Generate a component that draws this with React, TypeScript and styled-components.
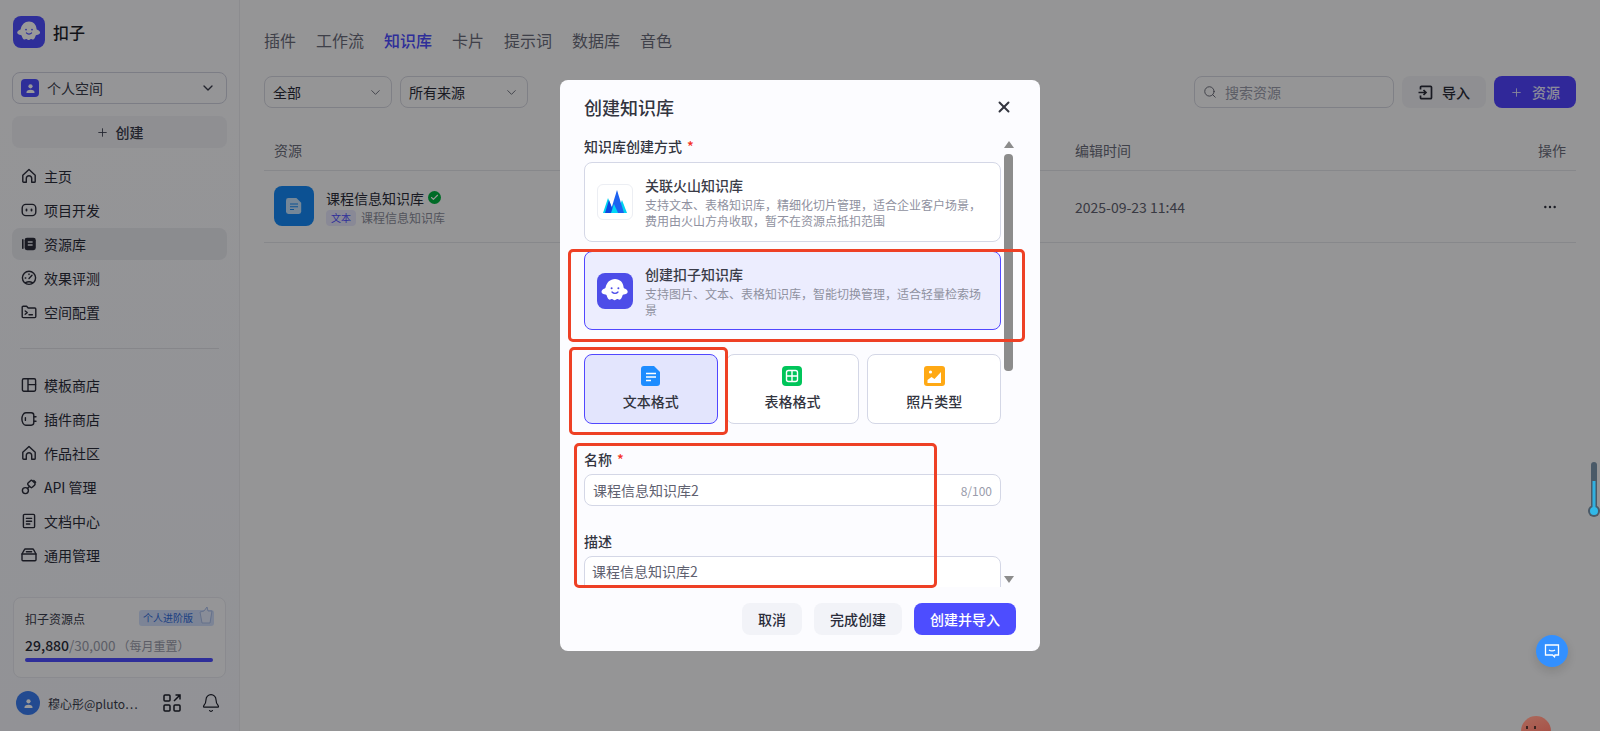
import React from "react";
import styled, { createGlobalStyle } from "styled-components";
import { Bell, Check, ChevronDown, Ellipsis, Plus, Search, X } from "lucide-react";

const GlobalStyle = createGlobalStyle`
  html, body { margin: 0; padding: 0; height: 100%; overflow: hidden; }
  body {
    font-family: "Noto Sans CJK SC", "Noto Sans", sans-serif;
    font-size: 14px;
    color: #1d1f2b;
    background: #f9f9fa;
  }
  * { box-sizing: border-box; }
`;

const Page = styled.div`
  display: flex;
  width: 1600px;
  height: 731px;
  overflow: hidden;
`;

const Sidebar = styled.aside`
  width: 240px;
  flex: none;
  display: flex;
  flex-direction: column;
  padding: 16px 12px 0;
  background: linear-gradient(180deg, #f9f9fc 0%, #f3f4fb 100%);
  border-right: 1px solid #eaeaee;
`;

const Brand = styled.div`
  display: flex;
  align-items: center;
  gap: 8px;
  height: 32px;
  padding-left: 1px;
  font-size: 16px;
  font-weight: 500;
`;

const LogoBox = styled.span<{ $size: number; $bg: string }>`
  width: ${(p) => p.$size}px;
  height: ${(p) => p.$size}px;
  flex: none;
  display: flex;
  align-items: center;
  justify-content: center;
  border-radius: 8px;
  background: ${(p) => p.$bg};
`;

const SpaceSelect = styled.div`
  height: 32px;
  margin-top: 24px;
  padding: 0 10px 0 8px;
  display: flex;
  align-items: center;
  gap: 8px;
  border: 1px solid #cfd0de;
  border-radius: 8px;
  color: #3a3c4c;
`;

const SpaceIcon = styled.span`
  width: 18px;
  height: 18px;
  border-radius: 4px;
  background: #4d4dff;
  color: #fff;
  display: flex;
  align-items: center;
  justify-content: center;
`;

const Grow = styled.span`
  flex: 1;
  min-width: 0;
`;

const CreateButton = styled.div`
  height: 32px;
  margin: 12px 0 12px;
  display: flex;
  align-items: center;
  justify-content: center;
  gap: 7px;
  border-radius: 8px;
  background: #eeeff4;
  color: #3a3c4c;
  font-weight: 500;
`;

const NavList = styled.nav`
  display: flex;
  flex-direction: column;
  gap: 2px;
`;

const NavItem = styled.div<{ $active?: boolean }>`
  height: 32px;
  padding-left: 9px;
  display: flex;
  align-items: center;
  gap: 7px;
  border-radius: 8px;
  background: ${(p) => (p.$active ? "#e8e9ef" : "transparent")};
  color: #2a2c3a;
  svg { flex: none; }
`;

const Divider = styled.div`
  height: 1px;
  margin: 20px 8px 20px;
  background: #dfe0e6;
`;

const PointsCard = styled.div`
  margin: 26px 1px 0;
  height: 81px;
  padding: 12px 12px 0 11px;
  border: 1px solid #e6e7ee;
  border-radius: 8px;
  background: #f8f9fc;
`;

const PointsHead = styled.div`
  display: flex;
  align-items: center;
  justify-content: space-between;
  height: 16px;
  font-size: 12px;
  color: #3a3c4c;
`;

const PlanBadge = styled.span`
  width: 75px;
  height: 16px;
  margin-right: -1px;
  display: flex;
  align-items: center;
  padding-left: 4px;
  justify-content: space-between;
  border-radius: 3px;
  background: #cfdcfb;
  color: #2f6bd9;
  font-size: 10px;
  line-height: 16px;
  svg {
    margin-top: -6px;
    flex: none;
  }
`;

const PointsRow = styled.div`
  margin-top: 9px;
  display: flex;
  align-items: baseline;
  height: 20px;
  color: #9a9cab;
  font-size: 12px;
  white-space: nowrap;
`;

const PointsValue = styled.span`
  font-size: 14px;
  font-weight: 500;
  color: #2a2c3a;
`;

const PointsTotal = styled.span`
  font-size: 13.5px;
  margin-right: 2px;
`;

const PointsBar = styled.div`
  height: 4px;
  margin-top: 3px;
  border-radius: 2px;
  background: #4d4dff;
`;

const UserRow = styled.div`
  margin-top: 13px;
  padding-left: 4px;
  display: flex;
  align-items: center;
`;

const Avatar = styled.span`
  width: 24px;
  height: 24px;
  flex: none;
  border-radius: 50%;
  background: #3a7cf0;
  color: #fff;
  display: flex;
  align-items: center;
  justify-content: center;
`;

const UserName = styled.span`
  width: 107px;
  margin: 0 8px;
  flex: none;
  font-size: 12px;
  color: #3a3c4c;
  white-space: nowrap;
`;

const UserActions = styled.span`
  display: flex;
  align-items: center;
  gap: 20px;
  color: #1d1f2b;
`;

const Main = styled.main`
  flex: 1;
  min-width: 0;
  padding: 27px 24px 0 24px;
`;

const Tabs = styled.div`
  display: flex;
  gap: 20px;
  height: 26px;
  align-items: center;
`;

const Tab = styled.span<{ $active?: boolean }>`
  font-size: 16px;
  font-weight: ${(p) => (p.$active ? 500 : 400)};
  color: ${(p) => (p.$active ? "#4d4dff" : "#6a6c7a")};
`;

const Toolbar = styled.div`
  margin-top: 23px;
  display: flex;
  align-items: center;
  gap: 8px;
`;

const FilterSelect = styled.div`
  width: 128px;
  height: 32px;
  padding: 0 8px 0 8px;
  display: flex;
  align-items: center;
  justify-content: space-between;
  border: 1px solid #d4d5e0;
  border-radius: 8px;
  color: #2a2c3a;
  svg { color: #6a6c7a; }
`;

const SearchBox = styled.div`
  width: 200px;
  height: 32px;
  margin-left: auto;
  padding: 0 8px;
  display: flex;
  align-items: center;
  gap: 8px;
  border: 1px solid #d4d5e0;
  border-radius: 8px;
  color: #9a9cab;
  svg { color: #5a5c6a; }
`;

const ToolButton = styled.div<{ $primary?: boolean; $width: number }>`
  height: 32px;
  width: ${(p) => p.$width}px;
  display: flex;
  align-items: center;
  justify-content: center;
  gap: 9px;
  border-radius: 8px;
  font-weight: 500;
  background: ${(p) => (p.$primary ? "#5144ff" : "#eeeff4")};
  color: ${(p) => (p.$primary ? "#e8e8ff" : "#2a2c3a")};
`;

const TableHead = styled.div`
  margin-top: 22px;
  height: 41px;
  padding: 0 10px 1px 10px;
  display: flex;
  align-items: center;
  border-bottom: 1px solid #e2e3e8;
  color: #6a6c7a;
`;

const TimeColumn = styled.span`
  margin-left: 773px;
  flex: 1;
  white-space: nowrap;
`;

const TableRow = styled.div`
  height: 72px;
  padding: 0 18px 1px 10px;
  display: flex;
  align-items: center;
  border-bottom: 1px solid #e2e3e8;
`;

const ResourceIcon = styled.span`
  width: 40px;
  height: 40px;
  flex: none;
  margin-right: 12px;
  border-radius: 8px;
  background: #1488f5;
  display: flex;
  align-items: center;
  justify-content: center;
`;

const ResourceText = styled.div`
  width: 749px;
  flex: none;
`;

const ResourceTitle = styled.div`
  display: flex;
  align-items: center;
  gap: 4px;
  line-height: 22px;
  color: #2a2c3a;
`;

const StatusDot = styled.span`
  width: 13px;
  height: 13px;
  border-radius: 50%;
  background: #00b341;
  color: #fff;
  display: flex;
  align-items: center;
  justify-content: center;
`;

const ResourceMeta = styled.div`
  display: flex;
  align-items: center;
  gap: 5px;
  height: 16px;
  margin-top: 1px;
  font-size: 12px;
  color: #8a8c9a;
`;

const TypeTag = styled.span`
  width: 30px;
  height: 16px;
  border-radius: 4px;
  background: #e4e4fb;
  color: #4d4dff;
  font-size: 10px;
  text-align: center;
  line-height: 16px;
`;

const RowTime = styled.span`
  flex: 1;
  margin-top: 2px;
  color: #5f6170;
`;

const RowMore = styled.span`
  display: flex;
  margin-top: 1px;
  color: #2a2c3a;
`;

const Backdrop = styled.div`
  position: fixed;
  inset: 0;
  display: flex;
  align-items: center;
  justify-content: center;
  background: rgba(0, 0, 0, 0.4);
`;

const Modal = styled.section`
  position: relative;
  width: 480px;
  height: 571px;
  display: flex;
  flex-direction: column;
  border-radius: 8px;
  background: #fcfcff;
`;

const ModalHead = styled.header`
  height: 56px;
  flex: none;
  padding: 0 27px 2px 24px;
  display: flex;
  align-items: center;
  justify-content: space-between;
  font-size: 18px;
  font-weight: 500;
  color: #33353f;
`;

const ModalBody = styled.div`
  flex: none;
  height: 451px;
  display: flex;
  padding-left: 24px;
`;

const FormArea = styled.div`
  width: 417px;
  flex: none;
  overflow: hidden;
`;

const Rail = styled.div`
  width: 9px;
  margin-left: 3px;
  display: flex;
  flex-direction: column;
  align-items: center;
  padding-top: 5px;
`;

const RailArrow = styled.span<{ $down?: boolean }>`
  width: 0;
  height: 0;
  flex: none;
  border-left: 5px solid transparent;
  border-right: 5px solid transparent;
  ${(p) => (p.$down ? "border-top: 7px solid #8c8c8c; margin-top: auto; margin-bottom: 4px;" : "border-bottom: 7px solid #8c8c8c;")}
`;

const RailThumb = styled.span`
  width: 9px;
  height: 217px;
  margin-top: 6px;
  border-radius: 4px;
  background: #8c8c8c;
`;

const FieldLabel = styled.div`
  height: 20px;
  line-height: 20px;
  font-weight: 500;
  color: #33353f;
  em {
    font-style: normal;
    color: #f5331f;
    margin-left: 5px;
  }
`;

const MethodCard = styled.div<{ $selected?: boolean; $height: number }>`
  height: ${(p) => p.$height}px;
  padding: 0 12px;
  display: flex;
  align-items: center;
  gap: 12px;
  border-radius: 8px;
  border: 1px solid ${(p) => (p.$selected ? "#5147ff" : "#d4d7e6")};
  background: ${(p) => (p.$selected ? "#ecedfe" : "#fff")};
  margin-top: ${(p) => (p.$selected ? "9px" : "6px")};
`;

const VolcanoBox = styled.span`
  width: 36px;
  height: 36px;
  flex: none;
  border: 1px solid #eceef3;
  border-radius: 6px;
  background: #fff;
  display: flex;
  align-items: center;
  justify-content: center;
`;

const MethodTitle = styled.div`
  font-weight: 500;
  line-height: 20px;
  color: #3a3c48;
`;

const MethodDesc = styled.div`
  margin-top: 2px;
  font-size: 12px;
  line-height: 16px;
  color: #8f91a0;
`;

const FormatRow = styled.div`
  margin-top: 24px;
  display: grid;
  grid-template-columns: repeat(3, 1fr);
  gap: 8px;
`;

const FormatCard = styled.div<{ $selected?: boolean }>`
  height: 70px;
  padding-top: 11px;
  display: flex;
  flex-direction: column;
  align-items: center;
  gap: 5px;
  border-radius: 8px;
  border: 1px solid ${(p) => (p.$selected ? "#5147ff" : "#d4d7e6")};
  background: ${(p) => (p.$selected ? "#e3e5fd" : "#fff")};
  font-weight: 500;
  color: #33353f;
`;

const TextInput = styled.div`
  height: 32px;
  margin-top: 5px;
  padding: 0 8px 0 8px;
  display: flex;
  align-items: center;
  justify-content: space-between;
  border: 1px solid #d4d7e6;
  border-radius: 8px;
  background: #fff;
  color: #5f6170;
`;

const Counter = styled.span`
  font-size: 12px;
  color: #9a9cab;
`;

const TextArea = styled.div`
  height: 80px;
  margin-top: 5px;
  padding: 4px 7px;
  line-height: 20px;
  border: 1px solid #d4d7e6;
  border-radius: 8px;
  background: #fff;
  color: #5f6170;
`;

const Field = styled.div<{ $gap: number }>`
  margin-top: ${(p) => p.$gap}px;
`;

const ModalFoot = styled.footer`
  flex: 1;
  padding: 16px 24px 0 0;
  display: flex;
  justify-content: flex-end;
  gap: 12px;
`;

const FootButton = styled.div<{ $primary?: boolean; $width: number }>`
  width: ${(p) => p.$width}px;
  height: 32px;
  display: flex;
  align-items: center;
  justify-content: center;
  border-radius: 8px;
  font-weight: 500;
  background: ${(p) => (p.$primary ? "#4d4dff" : "#f2f3f8")};
  color: ${(p) => (p.$primary ? "#fff" : "#2a2c3a")};
`;

const Annotation = styled.div<{ $l: number; $t: number; $w: number; $h: number }>`
  position: absolute;
  left: ${(p) => p.$l}px;
  top: ${(p) => p.$t}px;
  width: ${(p) => p.$w}px;
  height: ${(p) => p.$h}px;
  border: 3px solid #ee4025;
  border-radius: 5px;
  pointer-events: none;
`;

const Thermometer = styled.svg`
  position: fixed;
  right: 0;
  top: 461px;
`;

const ChatFab = styled.div`
  position: fixed;
  left: 1536px;
  top: 635px;
  width: 32px;
  height: 32px;
  border-radius: 50%;
  background: #3390ff;
  box-shadow: 0 4px 12px rgba(0, 0, 0, 0.15);
  display: flex;
  align-items: center;
  justify-content: center;
`;

const Ball = styled.div`
  position: fixed;
  left: 1521px;
  top: 716px;
  width: 30px;
  height: 30px;
  border-radius: 50%;
  background: linear-gradient(160deg, #ab6a5c, #a5453d);
  &::before,
  &::after {
    content: "";
    position: absolute;
    top: 10px;
    width: 2px;
    height: 3px;
    background: #3a2420;
  }
  &::before { left: 5px; }
  &::after { left: 13px; }
`;

function Ghost({ size, bg, fg = "#fff" }: { size: number; bg: string; fg?: string }) {
  return (
    <svg width={size} height={size} viewBox="0 0 32 32">
      <path
        fill={fg}
        d="M16 4c5 0 8.2 3.600 8.600 8.200 0 .7.3 1.100.9 1.300 1.800.6 3.200 1.800 3.200 3.200 0 1.700-2.200 2.700-4 2.700-.5 0-.8.3-1 .7-.8 2.400-1.600 4.600-3.200 4.600-1 0-1.600-.7-2.300-.7-.8 0-1.400 1.200-2.600 1.200s-1.800-1.200-2.600-1.200c-.7 0-1.300.7-2.300.7-1.600 0-2.400-2.200-3.200-4.600-.2-.4-.5-.7-1-.7-1.800 0-4-1-4-2.700 0-1.400 1.400-2.600 3.200-3.200.6-.2.9-.6.9-1.300C7.800 7.600 11 4 16 4z"
      />
      <circle cx="12.600" cy="13.200" r="1" fill={bg} />
      <circle cx="19.400" cy="13.200" r="1" fill={bg} />
      <path d="M13 17c1.500 1.800 4.500 1.800 6 0" fill="none" stroke={bg} strokeWidth="1.300" strokeLinecap="round" />
    </svg>
  );
}

function Person({ size }: { size: number }) {
  return (
    <svg width={size} height={size} viewBox="0 0 12 12" fill="currentColor">
      <circle cx="6" cy="3.600" r="2.300" />
      <path d="M1.600 10.400c0-2 1.600-3.100 4.400-3.100s4.400 1.100 4.400 3.100c0 .4-.2.6-.6.6H2.200c-.4 0-.6-.2-.6-.6z" />
    </svg>
  );
}

const stroke = { fill: "none", stroke: "currentColor", strokeWidth: 1.4, strokeLinecap: "round", strokeLinejoin: "round" } as const;

function HomeIcon() {
  return (
    <svg width="16" height="16" viewBox="0 0 16 16" {...stroke}>
      <path d="M1.800 7.200 8 1.600l6.200 5.600v6.200c0 .5-.4.9-.9.9h-2.600v-3.800a2.700 2.700 0 0 0-5.400 0v3.800H2.700c-.5 0-.9-.4-.9-.9z" />
    </svg>
  );
}

function BotIcon() {
  return (
    <svg width="16" height="16" viewBox="0 0 16 16" {...stroke}>
      <rect x="1.200" y="2.400" width="13.600" height="11.200" rx="3.600" />
      <path d="M5.500 7.400v1.200M10.500 7.400v1.200" strokeWidth="1.800" />
    </svg>
  );
}

function LibraryIcon() {
  return (
    <svg width="16" height="16" viewBox="0 0 16 16">
      <rect x="1" y="3" width="1.600" height="10" rx=".8" fill="currentColor" />
      <rect x="3.600" y="1.800" width="11.200" height="12.400" rx="2.400" fill="currentColor" />
      <path d="M6.800 6h4.800M6.800 9h4.800" stroke="#e8e9ef" strokeWidth="1.400" />
    </svg>
  );
}

function GaugeIcon() {
  return (
    <svg width="16" height="16" viewBox="0 0 16 16" {...stroke}>
      <circle cx="8" cy="7.800" r="6.600" />
      <path d="M8 8.400l3-3.200M4.200 8h.6M8 4v.5M4.500 12.600c2-1 5-1 7 0" />
    </svg>
  );
}

function FolderCodeIcon() {
  return (
    <svg width="16" height="16" viewBox="0 0 16 16" {...stroke}>
      <path d="M1.200 3.200c0-.6.4-1 1-1h3.400l1.600 1.800h6.600c.6 0 1 .4 1 1v7.600c0 .6-.4 1-1 1H2.200c-.6 0-1-.4-1-1z" />
      <path d="M4.200 7l2 1.600-2 1.600M8 10.800h3.400" />
    </svg>
  );
}

function TemplateIcon() {
  return (
    <svg width="16" height="16" viewBox="0 0 16 16" {...stroke}>
      <rect x="1.400" y="1.800" width="13.200" height="12.400" rx="1.400" />
      <path d="M7 1.800v12.400M7 7.600h7.600" />
    </svg>
  );
}

function PluginIcon() {
  return (
    <svg width="16" height="16" viewBox="0 0 16 16" {...stroke}>
      <path d="M4.800 1.800h5.400c1.600 0 2.600 1 2.600 2.600v7.200c0 1.600-1 2.600-2.600 2.600H4.800C2.400 14.200.9 11 .9 8s1.500-6.200 3.900-6.200z" />
      <path d="M4.400 6.600v2.800M13 5.800h2M13 10.200h2" />
    </svg>
  );
}

function ApiIcon() {
  return (
    <svg width="16" height="16" viewBox="0 0 16 16" {...stroke}>
      <circle cx="4.400" cy="11.600" r="3" />
      <rect x="7.400" y="2" width="6" height="6" rx="1.600" transform="rotate(45 10.400 5)" />
      <path d="M6.400 9.600l2-2M12.800 1.400l1.800 1.800" />
    </svg>
  );
}

function DocIcon() {
  return (
    <svg width="16" height="16" viewBox="0 0 16 16" {...stroke}>
      <rect x="2.400" y="1.400" width="11.200" height="13.200" rx="1.200" />
      <path d="M5.400 5.400h5.200M5.400 8.200h5.200M5.400 11h3.400" />
    </svg>
  );
}

function TrayIcon() {
  return (
    <svg width="16" height="16" viewBox="0 0 16 16" {...stroke}>
      <path d="M1 7l2.400-4.400c.2-.4.6-.6 1-.6h7.200c.4 0 .8.200 1 .6L15 7v5.800c0 .6-.4 1-1 1H2c-.6 0-1-.4-1-1z" />
      <path d="M1 7h14M5.400 4.800h5.200" />
    </svg>
  );
}

function AppsIcon() {
  return (
    <svg width="18" height="18" viewBox="0 0 18 18" fill="none" stroke="currentColor" strokeWidth="1.500">
      <rect x="1" y="1" width="6" height="6" rx="1" />
      <rect x="1" y="11" width="6" height="6" rx="1" />
      <rect x="11" y="11" width="6" height="6" rx="1" />
      <path d="M11 7l6-6M12.500 1H17v4.500" />
    </svg>
  );
}

function ImportIcon() {
  return (
    <svg width="15" height="15" viewBox="0 0 15 15" fill="none" stroke="currentColor" strokeWidth="1.700">
      <path d="M2.500 4.500V2.300c0-.6.4-1 1-1h9c.6 0 1 .4 1 1v10.400c0 .6-.4 1-1 1h-9c-.6 0-1-.4-1-1v-2.200" />
      <path d="M.5 7.500h7M5.500 5l2.500 2.500L5.500 10" />
    </svg>
  );
}

function DocTile({ bg, size }: { bg: string; size: number }) {
  return (
    <svg width={size} height={size} viewBox="0 0 20 20">
      <path d="M3 0h10l6 6v11a3 3 0 0 1-3 3H3a3 3 0 0 1-3-3V3a3 3 0 0 1 3-3z" fill={bg} />
      <path d="M5 7.500h10M5 11h10M5 14.500h5" stroke={bg === "#1d8cff" ? "#fff" : "#1488f5"} strokeWidth="1.300" />
    </svg>
  );
}

function SheetTile() {
  return (
    <svg width="20" height="20" viewBox="0 0 20 20">
      <rect width="20" height="20" rx="4" fill="#00c55a" />
      <rect x="4.500" y="4.500" width="11" height="11" rx="2" fill="none" stroke="#fff" strokeWidth="1.400" />
      <path d="M10 4.500v11M4.500 10h11" stroke="#fff" strokeWidth="1.400" />
    </svg>
  );
}

function PhotoTile() {
  return (
    <svg width="21" height="20" viewBox="0 0 21 20">
      <rect width="21" height="20" rx="3" fill="#ffa914" />
      <path d="M3.500 17v-3l4-3 3 2 6.500-7v11z" fill="#fff" />
      <circle cx="6.500" cy="6" r="1.600" fill="#fff" />
    </svg>
  );
}

function VolcanoMark() {
  return (
    <svg width="24" height="24" viewBox="0 0 24 24">
      <path d="M5 8 11 23H0z" fill="#00d2f0" />
      <path d="M19 10l5 13H14z" fill="#00d2f0" />
      <path d="M14 0l7 23H7z" fill="#1c62f0" />
      <path d="M6 10l5 13H2z" fill="#0f48e0" />
      <path d="M11 14l4 9H8z" fill="#00d8f5" />
    </svg>
  );
}

const topNav = [
  { label: "主页", icon: <HomeIcon /> },
  { label: "项目开发", icon: <BotIcon /> },
  { label: "资源库", icon: <LibraryIcon />, active: true },
  { label: "效果评测", icon: <GaugeIcon /> },
  { label: "空间配置", icon: <FolderCodeIcon /> },
];

const bottomNav = [
  { label: "模板商店", icon: <TemplateIcon /> },
  { label: "插件商店", icon: <PluginIcon /> },
  { label: "作品社区", icon: <HomeIcon /> },
  { label: "API 管理", icon: <ApiIcon /> },
  { label: "文档中心", icon: <DocIcon /> },
  { label: "通用管理", icon: <TrayIcon /> },
];

const tabs = ["插件", "工作流", "知识库", "卡片", "提示词", "数据库", "音色"];

// full-width punctuation, written as escapes so it stays CJK
const volcanoDesc = "支持文本、表格知识库\uFF0C精细化切片管理\uFF0C适合企业客户场景\uFF0C费用由火山方舟收取\uFF0C暂不在资源点抵扣范围";
const cozeDesc = "支持图片、文本、表格知识库\uFF0C智能切换管理\uFF0C适合轻量检索场景";
const resetNote = "\uFF08每月重置\uFF09";

export default function App() {
  return (
    <>
      <GlobalStyle />
      <Page>
        <Sidebar>
          <Brand>
            <LogoBox $size={32} $bg="#4d4dff">
              <Ghost size={28} bg="#4d4dff" />
            </LogoBox>
            扣子
          </Brand>
          <SpaceSelect>
            <SpaceIcon>
              <Person size={11} />
            </SpaceIcon>
            <Grow>个人空间</Grow>
            <ChevronDown size={16} strokeWidth={2} />
          </SpaceSelect>
          <CreateButton>
            <Plus size={13} strokeWidth={1.6} />
            创建
          </CreateButton>
          <NavList>
            {topNav.map((n) => (
              <NavItem key={n.label} $active={n.active}>
                {n.icon}
                {n.label}
              </NavItem>
            ))}
          </NavList>
          <Divider />
          <NavList>
            {bottomNav.map((n) => (
              <NavItem key={n.label}>
                {n.icon}
                {n.label}
              </NavItem>
            ))}
          </NavList>
          <PointsCard>
            <PointsHead>
              扣子资源点
              <PlanBadge>
                个人进阶版
                <svg width="16" height="18" viewBox="0 0 16 18" fill="#e4ebfd" stroke="#a9bde8" strokeWidth="1">
                  <path d="M2 6l4-1 3-4 1 4h4l-2 12H4z" />
                </svg>
              </PlanBadge>
            </PointsHead>
            <PointsRow>
              <PointsValue>29,880</PointsValue>
              <PointsTotal>/30,000</PointsTotal>
              {resetNote}
            </PointsRow>
            <PointsBar />
          </PointsCard>
          <UserRow>
            <Avatar>
              <Person size={11} />
            </Avatar>
            <UserName>穆心彤@pluto⋯</UserName>
            <UserActions>
              <AppsIcon />
              <Bell size={20} strokeWidth={1.4} />
            </UserActions>
          </UserRow>
        </Sidebar>
        <Main>
          <Tabs>
            {tabs.map((t) => (
              <Tab key={t} $active={t === "知识库"}>
                {t}
              </Tab>
            ))}
          </Tabs>
          <Toolbar>
            <FilterSelect>
              全部
              <ChevronDown size={15} strokeWidth={1.5} />
            </FilterSelect>
            <FilterSelect>
              所有来源
              <ChevronDown size={15} strokeWidth={1.5} />
            </FilterSelect>
            <SearchBox>
              <Search size={14} strokeWidth={1.5} />
              搜索资源
            </SearchBox>
            <ToolButton $width={84}>
              <ImportIcon />
              导入
            </ToolButton>
            <ToolButton $primary $width={82}>
              <Plus size={13} strokeWidth={1.6} />
              资源
            </ToolButton>
          </Toolbar>
          <TableHead>
            资源
            <TimeColumn>编辑时间</TimeColumn>
            <span>操作</span>
          </TableHead>
          <TableRow>
            <ResourceIcon>
              <DocTile bg="rgba(255,255,255,0.75)" size={16} />
            </ResourceIcon>
            <ResourceText>
              <ResourceTitle>
                课程信息知识库
                <StatusDot>
                  <Check size={9} strokeWidth={3} />
                </StatusDot>
              </ResourceTitle>
              <ResourceMeta>
                <TypeTag>文本</TypeTag>
                课程信息知识库
              </ResourceMeta>
            </ResourceText>
            <RowTime>2025-09-23 11:44</RowTime>
            <RowMore>
              <Ellipsis size={16} strokeWidth={1.6} />
            </RowMore>
          </TableRow>
        </Main>
      </Page>
      <Backdrop>
        <Modal>
          <ModalHead>
            创建知识库
            <X size={18} strokeWidth={2.6} />
          </ModalHead>
          <ModalBody>
            <FormArea>
              <FieldLabel>
                知识库创建方式<em>*</em>
              </FieldLabel>
              <MethodCard $height={80}>
                <VolcanoBox>
                  <VolcanoMark />
                </VolcanoBox>
                <div>
                  <MethodTitle>关联火山知识库</MethodTitle>
                  <MethodDesc>{volcanoDesc}</MethodDesc>
                </div>
              </MethodCard>
              <MethodCard $selected $height={79}>
                <LogoBox $size={36} $bg="#4d4de8">
                  <Ghost size={32} bg="#4d4de8" />
                </LogoBox>
                <div>
                  <MethodTitle>创建扣子知识库</MethodTitle>
                  <MethodDesc>{cozeDesc}</MethodDesc>
                </div>
              </MethodCard>
              <FormatRow>
                <FormatCard $selected>
                  <DocTile bg="#1d8cff" size={20} />
                  文本格式
                </FormatCard>
                <FormatCard>
                  <SheetTile />
                  表格格式
                </FormatCard>
                <FormatCard>
                  <PhotoTile />
                  照片类型
                </FormatCard>
              </FormatRow>
              <Field $gap={25}>
                <FieldLabel>
                  名称<em>*</em>
                </FieldLabel>
                <TextInput>
                  课程信息知识库2
                  <Counter>8/100</Counter>
                </TextInput>
              </Field>
              <Field $gap={25}>
                <FieldLabel>描述</FieldLabel>
                <TextArea>课程信息知识库2</TextArea>
              </Field>
            </FormArea>
            <Rail>
              <RailArrow />
              <RailThumb />
              <RailArrow $down />
            </Rail>
          </ModalBody>
          <ModalFoot>
            <FootButton $width={60}>取消</FootButton>
            <FootButton $width={88}>完成创建</FootButton>
            <FootButton $primary $width={102}>
              创建并导入
            </FootButton>
          </ModalFoot>
          <Annotation $l={8} $t={169} $w={457} $h={93} />
          <Annotation $l={9} $t={267} $w={159} $h={88} />
          <Annotation $l={14} $t={363} $w={363} $h={145} />
        </Modal>
      </Backdrop>
      <Thermometer width="12" height="58" viewBox="0 0 12 58">
        <rect x="3" y="1" width="6" height="46" rx="3" fill="#4a5a68" />
        <circle cx="6" cy="50" r="6" fill="#4a5a68" />
        <rect x="4.500" y="20" width="3" height="30" fill="#30b0e0" />
        <circle cx="6" cy="50" r="4" fill="#30b8e8" />
      </Thermometer>
      <ChatFab>
        <svg width="16" height="16" viewBox="0 0 16 16" fill="none" stroke="#fff" strokeWidth="1.300">
          <path d="M1.500 2h13v10H11l-.5 1.800L8.500 12h-7z" />
          <path d="M5 7c1.500 1 4.500 1 6 0" />
        </svg>
      </ChatFab>
      <Ball />
    </>
  );
}
